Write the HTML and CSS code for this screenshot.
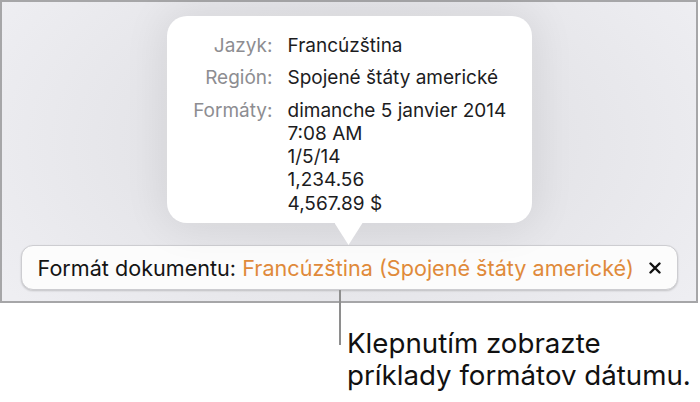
FILE: index.html
```html
<!DOCTYPE html>
<html lang="sk">
<head>
<meta charset="utf-8">
<title>Formát dokumentu</title>
<link rel="stylesheet" href="styles.css">
</head>
<body>
<div class="screen">
  <div class="popover">
    <div class="label">Jazyk:</div>
    <div class="value">Francúzština</div>
    <div class="label">Región:</div>
    <div class="value">Spojené štáty americké</div>
    <div class="label">Formáty:</div>
    <div class="value">dimanche 5 janvier 2014<br>7:08 AM<br>1/5/14<br>1,234.56<br>4,567.89 $</div>
  </div>
  <div class="bar">
    <span class="bar-text">Formát dokumentu: <span class="accent">Francúzština (Spojené štáty americké)</span></span>
    <svg class="close" width="12" height="12" viewBox="0 0 12 12"><path d="M1.5 1.5 L10.5 10.5 M10.5 1.5 L1.5 10.5" stroke="#111" stroke-width="2.4" stroke-linecap="round"/></svg>
  </div>
</div>
<div class="callout">
  <div class="leader"></div>
  <div class="callout-text">Klepnutím zobrazte<br>príklady formátov dátumu.</div>
</div>
</body>
</html>
```
FILE: styles.css
```css
html, body {
  margin: 0;
  padding: 0;
  background: #ffffff;
}
body {
  width: 700px;
  height: 402px;
  overflow: hidden;
  font-family: Inter, "Liberation Sans", sans-serif;
}
.screen {
  box-sizing: border-box;
  width: 698px;
  height: 303px;
  border: 2px solid #a6a6a8;
  background: radial-gradient(ellipse 420px 260px at 349px 140px, #dcdce0 0%, #e5e5e9 50%, #eeeef2 100%);
  display: flex;
  flex-direction: column;
  align-items: center;
  padding-top: 14px;
}
.popover {
  position: relative;
  box-sizing: border-box;
  width: 365px;
  height: 207px;
  background: #ffffff;
  border-radius: 20px;
  box-shadow: 0 0 40px 6px rgba(0, 0, 0, 0.07);
  padding: 18px 0 0 0;
  display: grid;
  grid-template-columns: 106px auto;
  column-gap: 15px;
  row-gap: 9px;
  align-content: start;
  font-size: 19px;
  line-height: 23.3px;
}
.popover::after {
  content: "";
  position: absolute;
  left: 168px;
  bottom: -22px;
  width: 28px;
  height: 22px;
  background: #ffffff;
  clip-path: polygon(0 0, 100% 0, 50% 100%);
}
.label {
  text-align: right;
  color: #8d8d91;
}
.value {
  color: #1c1c1e;
}
.bar {
  box-sizing: border-box;
  width: 657px;
  height: 45px;
  margin-top: 22px;
  background: #fcfcfc;
  border: 1px solid #cdcdd1;
  border-radius: 12px;
  box-shadow: 0 1px 2px rgba(0, 0, 0, 0.18);
  display: flex;
  align-items: center;
  padding: 0 16px 0 16px;
  font-size: 21.6px;
}
.bar-text {
  color: #141414;
  flex: 1;
}
.accent {
  color: #e08a3a;
}
.close {
  flex: none;
}
.callout {
  display: flex;
  margin-left: 339px;
  margin-top: -13px;
  position: relative;
}
.leader {
  width: 2px;
  height: 55px;
  background: #8e8e8e;
  flex: none;
}
.callout-text {
  margin-left: 6px;
  margin-top: 37px;
  font-size: 27.7px;
  line-height: 32px;
  color: #111111;
}
```
